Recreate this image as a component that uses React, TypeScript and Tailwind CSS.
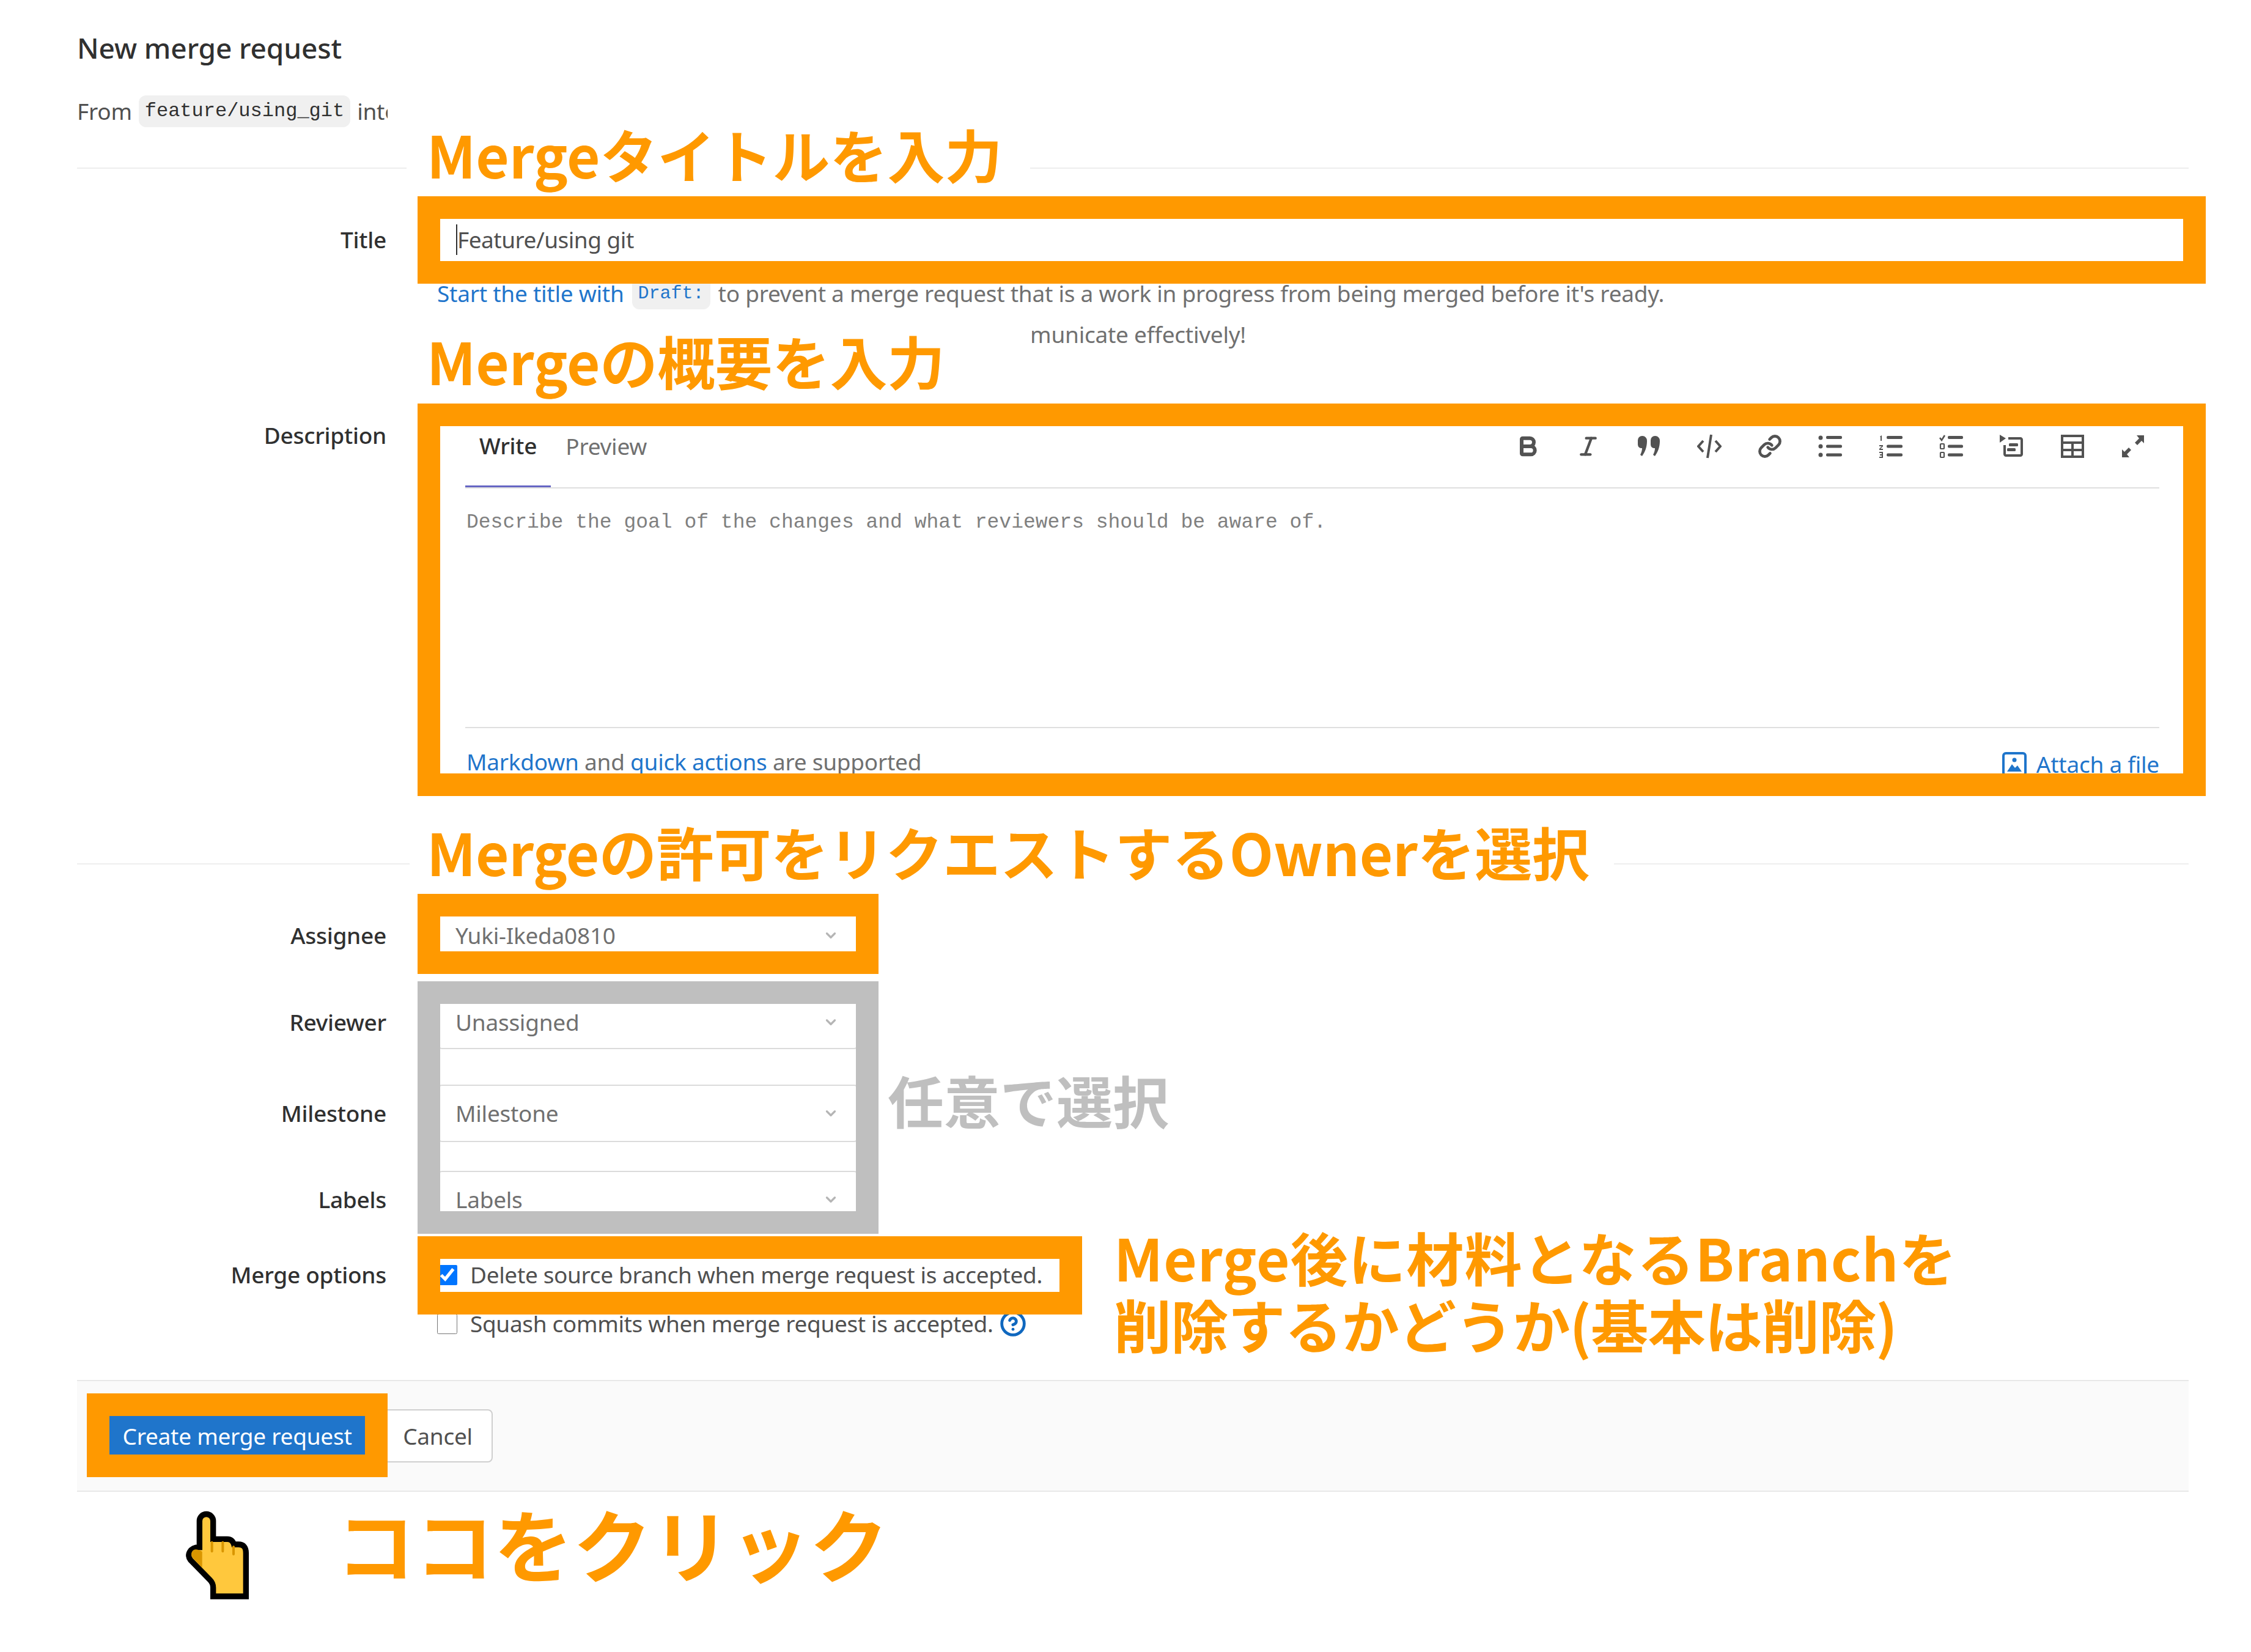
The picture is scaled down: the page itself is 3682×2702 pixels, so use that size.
import { Bold, ChevronDown, CircleHelp, Italic, Link } from "lucide-react";
import type { ReactNode } from "react";

const UI_FONT = "font-['Noto_Sans',sans-serif]";
const JP_FONT = "font-['Noto_Sans_CJK_JP',sans-serif]";

function Row({ label, className, labelClass, children }: { label?: string; className: string; labelClass?: string; children: ReactNode }) {
  return (
    <div className={`grid grid-cols-[506px_1fr] gap-x-[83px] pr-[8px] ${className}`}>
      <div className={`flex justify-end text-[37px] font-medium leading-[52px] tracking-[-0.25px] text-[#303030] ${labelClass ?? "items-center"}`}>{label}</div>
      <div className="min-w-0">{children}</div>
    </div>
  );
}

function Select({ value, className }: { value: string; className: string }) {
  return (
    <div className={`flex w-[690px] items-center justify-between rounded-lg border-2 border-[#dbdbdb] bg-white pl-[28px] pr-[31px] text-[37px] tracking-[-0.25px] text-[#707070] ${className}`}>
      <span>{value}</span>
      <ChevronDown size={26} strokeWidth={3} className="text-[#b5b5b5]" />
    </div>
  );
}

function ToolIcon({ children }: { children: ReactNode }) {
  return (
    <svg viewBox="0 0 40 40" className="h-[40px] w-[40px] text-[#525252]" fill="currentColor">
      {children}
    </svg>
  );
}

function Toolbar() {
  return (
    <div className="ml-auto flex items-center gap-[59px] pr-[23px] pt-[3px]">
      <Bold size={40} strokeWidth={3.6} className="text-[#525252]" />
      <Italic size={40} strokeWidth={2.6} className="text-[#525252]" />
      <ToolIcon>
        <path d="M9 3a7.5 7.5 0 0 1 8 8c0 10-3 18-8 25l-3-2c2-4 3-8 3-11a6 6 0 0 1-7-6V10a7 7 0 0 1 7-7ZM30 3a7.5 7.5 0 0 1 8 8c0 10-3 18-8 25l-3-2c2-4 3-8 3-11a6 6 0 0 1-7-6V10a7 7 0 0 1 7-7Z" />
      </ToolIcon>
      <ToolIcon>
        <path d="M10 11 2 20l8 9M30 11l8 9-8 9M23 1l-6 38" fill="none" stroke="currentColor" strokeWidth="4" />
      </ToolIcon>
      <Link size={40} strokeWidth={2.8} className="text-[#525252]" />
      <ToolIcon>
        <circle cx="4" cy="6" r="3.5" />
        <circle cx="4" cy="20" r="3.5" />
        <circle cx="4" cy="34" r="3.5" />
        <rect x="13" y="3" width="26" height="5" rx="2" />
        <rect x="13" y="17.5" width="26" height="5" rx="2" />
        <rect x="13" y="31.5" width="26" height="5" rx="2" />
      </ToolIcon>
      <ToolIcon>
        <path d="M2 4l3-2v9H3V5ZM1 18h6v2l-4 4h4v2H1v-2l4-4H1ZM1 29h6v10H1v-2h4v-2H2v-2h3v-2H1Z" />
        <rect x="13" y="3" width="26" height="5" rx="2" />
        <rect x="13" y="17.5" width="26" height="5" rx="2" />
        <rect x="13" y="31.5" width="26" height="5" rx="2" />
      </ToolIcon>
      <ToolIcon>
        <path d="M1 6l3 4 5-8" fill="none" stroke="currentColor" strokeWidth="2.6" />
        <rect x="2" y="16" width="6" height="8" rx="1" fill="none" stroke="currentColor" strokeWidth="2.2" />
        <rect x="2" y="30" width="6" height="8" rx="1" fill="none" stroke="currentColor" strokeWidth="2.2" />
        <rect x="14" y="3" width="25" height="5" rx="2" />
        <rect x="14" y="17.5" width="25" height="5" rx="2" />
        <rect x="14" y="31.5" width="25" height="5" rx="2" />
      </ToolIcon>
      <ToolIcon>
        <path d="M0 1l10 6-10 7Z" />
        <path d="M14 5h20c2 0 4 2 4 4v24c0 2-2 4-4 4H10c-2 0-4-2-4-4V18h4v15h24V9H14Z" />
        <rect x="15" y="15" width="15" height="5" rx="1.5" />
        <rect x="12" y="23" width="14" height="5" rx="1.5" />
      </ToolIcon>
      <ToolIcon>
        <path fillRule="evenodd" d="M1 1h38v38H1ZM5 5v7h30V5ZM5 16v8h13v-8Zm17 0v8h13v-8ZM5 28v7h13v-7Zm17 0v7h13v-7Z" />
      </ToolIcon>
      <ToolIcon>
        <path d="M26 2h12v13l-4-4-7 7-4-4 7-7ZM14 38H2V25l4 4 7-7 4 4-7 7Z" />
      </ToolIcon>
    </div>
  );
}

function PointingHand() {
  return (
    <svg viewBox="0 0 600 600" className="absolute left-[260px] top-[2440px] h-[200px] w-[200px]">
      <path
        d="M266 513V470Q266 448 250 432L155 335C135 312 150 272 199 272V143A33 33 0 0 1 266 143V232H335Q360 232 368 258H390Q427 258 427 300V513Z"
        fill="#ffc83d"
        stroke="#000"
        strokeWidth="28"
      />
      <path d="M212 294Q195 283 180 283C160 285 152 308 166 325L212 372Z" fill="#d99600" />
      <path d="M260 248V292M313 248V292M366 270V306" stroke="#d99600" strokeWidth="12" strokeLinecap="round" />
    </svg>
  );
}

export default function App() {
  return (
    <div className={`relative h-[2702px] w-[3682px] overflow-hidden bg-white ${UI_FONT}`}>
      <form className="pl-[126px] pr-[102px] pt-[48px]">
        <h1 className="h-[60px] text-[46px] font-medium leading-[60px] tracking-[-0.1px] text-[#303030]">New merge request</h1>
        <div className="mt-[48px] flex h-[52px] items-center text-[37px] tracking-[-0.25px] text-[#505050]">
          <span>From</span>
          <code className="mx-[11px] rounded-xl bg-[#f0f0f0] px-[10px] font-['Liberation_Mono',monospace] text-[32px] leading-[52px] tracking-normal text-[#303030]">feature/using_git</code>
          <span>into main</span>
        </div>
        <div className="mt-[66px] h-[2px] bg-[#eeeeee]" />

        <Row label="Title" className="mt-[69px]">
          <div className="flex h-[94px] items-center pl-[31px] text-[37px] tracking-[-0.5px] text-[#505050]">
            <span className="border-l-2 border-[#303030] leading-[50px]">Feature/using git</span>
          </div>
        </Row>
        <Row className="mt-[15px]">
          <div className="flex h-[52px] items-center whitespace-nowrap text-[37px] tracking-[-0.25px] text-[#707070]">
            <span className="text-[#1f75cb]">Start the title with</span>
            <code className="mx-[13px] rounded-xl bg-[#f0f0f0] px-[10px] font-['Liberation_Mono',monospace] text-[30px] leading-[52px] tracking-normal text-[#1f75cb]">Draft:</code>
            <span>to prevent a merge request that is a work in progress from being merged before it's ready.</span>
          </div>
        </Row>
        <Row className="mt-[15px]">
          <div className="flex h-[52px] items-center justify-end whitespace-nowrap text-[37px] tracking-[-0.25px] text-[#707070]">
            <span className="mr-[1534px]">Add description templates to help your contributors communicate effectively!</span>
          </div>
        </Row>

        <Row label="Description" className="mt-[87px]" labelClass="items-start pt-[26px]">
          <div className="pl-[46px] pr-[40px]">
            <div className="flex h-[139px] items-center border-b-2 border-[#dfdfdf] text-[37px] tracking-[-0.25px]">
              <div className="flex h-full items-center border-b-[3px] border-[#6666c4] px-[23px] pt-[3px] font-medium text-[#303030]">Write</div>
              <div className="ml-[24px] pt-[3px] text-[#707070]">Preview</div>
              <Toolbar />
            </div>
            <div className="h-[390px] pl-[2px] pt-[30px] font-['Liberation_Mono',monospace] text-[33px] leading-[52px] text-[#808080]">
              Describe the goal of the changes and what reviewers should be aware of.
            </div>
            <div className="flex h-[111px] items-center justify-between border-t-2 border-[#dfdfdf] pl-[2px] text-[37px] tracking-[-0.25px] text-[#707070]">
              <div>
                <span className="text-[#1f75cb]">Markdown</span> and <span className="text-[#1f75cb]">quick actions</span> are supported
              </div>
              <div className="flex items-center gap-[16px] pt-[8px] text-[#1f75cb]">
                <svg viewBox="0 0 40 40" className="h-[40px] w-[40px]" fill="none">
                  <rect x="2" y="2" width="36" height="36" rx="4" stroke="currentColor" strokeWidth="4" />
                  <circle cx="20" cy="13" r="3.5" fill="currentColor" />
                  <path d="M8 32 16 20l5 6 4-4 7 10Z" fill="currentColor" />
                </svg>
                <span>Attach a file</span>
              </div>
            </div>
          </div>
        </Row>
        <div className="mt-[112px] h-[2px] bg-[#eeeeee]" />

        <Row label="Assignee" className="mt-[73px]">
          <Select value="Yuki-Ikeda0810" className="h-[86px]" />
        </Row>
        <Row label="Reviewer" className="mt-[55px]">
          <Select value="Unassigned" className="h-[88px]" />
        </Row>
        <Row label="Milestone" className="mt-[58px]">
          <Select value="Milestone" className="h-[94px]" />
        </Row>
        <Row label="Labels" className="mt-[47px]">
          <Select value="Labels" className="h-[94px]" />
        </Row>

        <Row label="Merge options" className="mt-[50px]">
          <label className="flex h-[52px] items-center gap-[21px] whitespace-nowrap text-[37px] tracking-[-0.35px] text-[#505050]">
            <input type="checkbox" defaultChecked className="h-[33px] w-[33px]" />
            Delete source branch when merge request is accepted.
          </label>
        </Row>
        <Row className="mt-[28px]">
          <label className="flex h-[52px] items-center gap-[21px] whitespace-nowrap text-[37px] tracking-[-0.35px] text-[#505050]">
            <input type="checkbox" className="h-[33px] w-[33px]" />
            <span>Squash commits when merge request is accepted.</span>
            <CircleHelp size={44} strokeWidth={2.6} className="-ml-[11px] text-[#1068bf]" />
          </label>
        </Row>

        <div className="mt-[66px] flex h-[183px] items-center border-y-2 border-[#e8e8e8] bg-[#fafafa] pl-[24px]">
          <button type="button" className="h-[87px] w-[476px] bg-[#1f75cb] text-[37px] tracking-[-0.25px] text-white">Create merge request</button>
          <button type="button" className="h-[87px] w-[180px] rounded-r-lg border-2 border-[#cfcfcf] bg-white text-[37px] tracking-[-0.25px] text-[#505050]">Cancel</button>
        </div>
      </form>

      {/* white patches the annotator pasted over the form */}
      <div className="absolute left-[634px] top-[150px] h-[70px] w-[300px] bg-white" />
      <div className="absolute left-[665px] top-[220px] h-[100px] w-[1020px] bg-white" />
      <div className="absolute left-[670px] top-[512px] h-[148px] w-[1018px] bg-white" />
      <div className="absolute left-[670px] top-[1340px] h-[120px] w-[1970px] bg-white" />

      {/* annotation frames */}
      <div className="absolute left-[683px] top-[321px] h-[143px] w-[2925px] border-[37px] border-[#ff9900]" />
      <div className="absolute left-[683px] top-[660px] h-[642px] w-[2925px] border-[37px] border-[#ff9900]" />
      <div className="absolute left-[683px] top-[1462px] h-[131px] w-[754px] border-[37px] border-[#ff9900]" />
      <div className="absolute left-[683px] top-[1605px] h-[413px] w-[754px] border-[37px] border-[#bfbfbf]" />
      <div className="absolute left-[683px] top-[2022px] h-[128px] w-[1087px] border-[37px] border-[#ff9900]" />
      <div className="absolute left-[142px] top-[2279px] h-[137px] w-[492px] border-[37px] border-[#ff9900]" />

      {/* annotation labels */}
      <div className={`absolute left-[698px] top-[204px] whitespace-nowrap text-[94px] font-bold leading-none text-[#ff9900] ${JP_FONT}`}>Mergeタイトルを入力</div>
      <div className={`absolute left-[698px] top-[542px] whitespace-nowrap text-[94px] font-bold leading-none text-[#ff9900] ${JP_FONT}`}>Mergeの概要を入力</div>
      <div className={`absolute left-[698px] top-[1345px] whitespace-nowrap text-[94px] font-bold leading-none tracking-[-0.3px] text-[#ff9900] ${JP_FONT}`}>Mergeの許可をリクエストするOwnerを選択</div>
      <div className={`absolute left-[1452px] top-[1752px] whitespace-nowrap text-[92px] font-bold leading-none text-[#bfbfbf] ${JP_FONT}`}>任意で選択</div>
      <div className={`absolute left-[1822px] top-[2000px] whitespace-nowrap text-[94px] font-bold leading-[110px] text-[#ff9900] ${JP_FONT}`}>
        <span className="tracking-[1px]">Merge後に材料となるBranchを</span>
        <br />
        <span className="tracking-[-0.8px]">削除するかどうか(基本は削除)</span>
      </div>
      <PointingHand />
      <div className={`absolute left-[550px] top-[2458px] whitespace-nowrap text-[129px] font-bold leading-none text-[#ff9900] ${JP_FONT}`}>ココをクリック</div>
    </div>
  );
}
